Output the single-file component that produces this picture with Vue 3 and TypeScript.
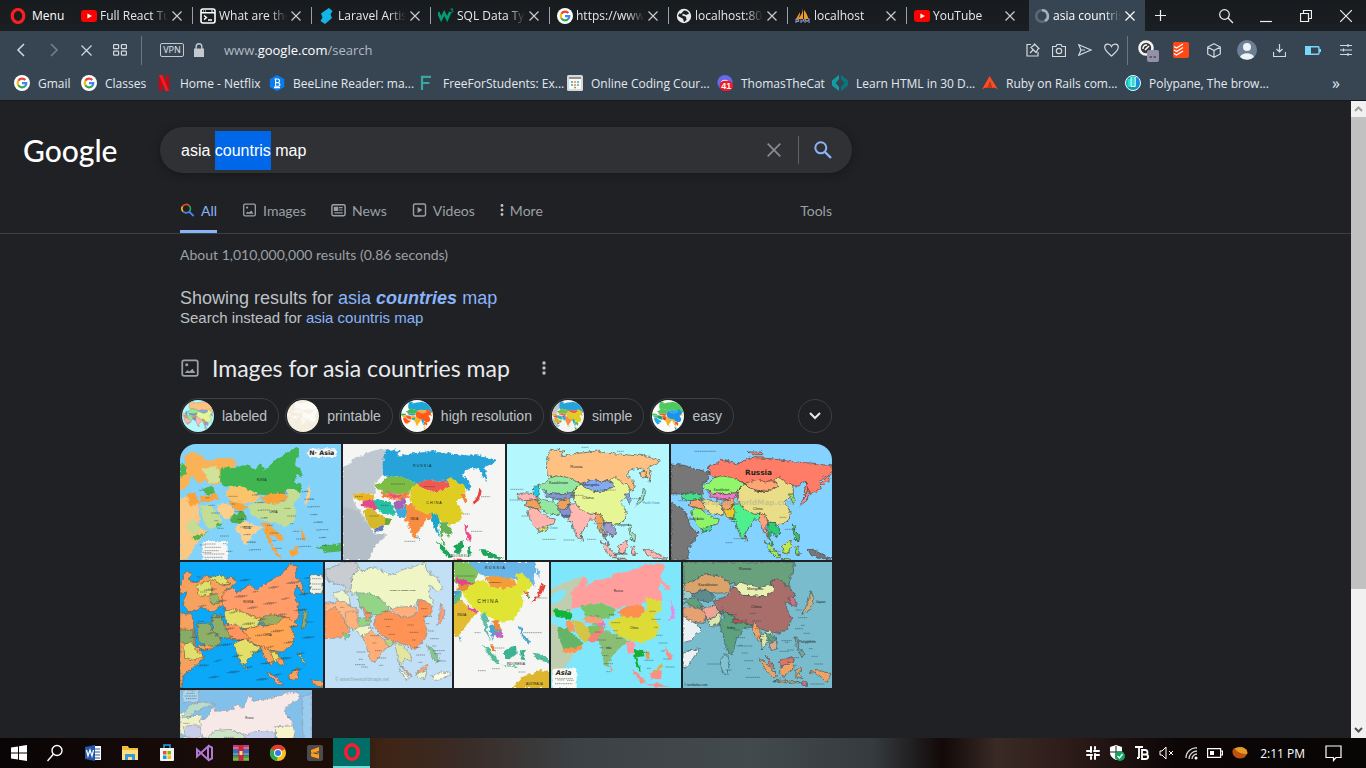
<script setup lang="ts">
import { onMounted, ref } from 'vue'

type Area = [fill: string, points: string]
type Label = [text: string, x: number, y: number, size: number, fill?: string]
interface MapTile {
  name: string
  w: number
  h: number
  sea: string
  outline: string
  areas: Area[]
  labels: Label[]
  notes: [x: number, y: number, length: number][]
}

const query = ref('asia countris map')
const box = ref<HTMLInputElement | null>(null)

onMounted(() => {
  box.value?.focus()
  box.value?.setSelectionRange(5, 13)
})

const tabs = [
  { icon: 'youtube', title: 'Full React Tu' },
  { icon: 'terminal', title: 'What are the' },
  { icon: 'bolt', title: 'Laravel Artis' },
  { icon: 'w3', title: 'SQL Data Ty' },
  { icon: 'google', title: 'https://www' },
  { icon: 'globe', title: 'localhost:80' },
  { icon: 'sail', title: 'localhost' },
  { icon: 'youtube', title: 'YouTube' },
  { icon: 'spinner', title: 'asia countris' },
]

const bookmarks = [
  { icon: 'google', title: 'Gmail' },
  { icon: 'google', title: 'Classes' },
  { icon: 'netflix', title: 'Home - Netflix' },
  { icon: 'beeline', title: 'BeeLine Reader: ma...' },
  { icon: 'f', title: 'FreeForStudents: Ex...' },
  { icon: 'calendar', title: 'Online Coding Cour...' },
  { icon: 'discord', title: 'ThomasTheCat' },
  { icon: 'learn', title: 'Learn HTML in 30 D...' },
  { icon: 'ruby', title: 'Ruby on Rails com...' },
  { icon: 'polypane', title: 'Polypane, The brow...' },
]

const shape = {
  russia: '120,90 118,60 130,20 150,15 170,22 160,34 180,34 210,28 240,25 270,18 290,28 340,30 380,35 400,30 430,40 460,52 440,62 425,70 432,90 428,112 418,95 410,78 395,72 370,78 360,92 378,110 382,130 375,142 362,125 335,108 318,114 300,110 280,114 262,106 240,112 222,119 200,108 180,100 150,95 135,102',
  kazakhstan: '92,122 115,116 130,102 150,95 180,100 205,110 222,120 206,132 200,146 180,148 160,152 140,146 126,152 108,136',
  mongolia: '220,119 240,112 262,106 280,114 300,110 320,115 318,130 300,138 275,146 250,137 232,130',
  china: '202,146 206,132 222,120 232,130 250,137 275,146 300,138 320,128 312,108 325,100 365,125 368,145 352,165 338,172 350,190 358,205 355,225 340,238 320,242 300,235 285,225 265,215 248,210 225,200 205,182 198,162',
  india: '186,180 205,180 225,200 250,210 268,212 262,226 250,225 240,245 225,262 218,284 210,280 198,250 195,236 182,230 190,215 184,200',
  stans: '110,142 126,152 140,146 160,152 180,148 200,146 196,160 176,166 150,168 130,160 118,158',
  iran: '92,165 115,168 140,172 152,188 157,212 135,212 115,205 98,190',
  afghan: '150,176 175,164 190,168 182,192 160,196 152,188',
  pakistan: '157,196 182,192 190,178 192,206 182,222 164,216',
  turkey: '30,152 50,146 92,150 94,164 60,170 34,166',
  iraq: '60,170 92,165 102,190 95,197 74,190 56,186',
  arabia: '62,200 72,190 95,197 115,215 128,222 145,225 140,240 115,247 92,255 80,245 68,222',
  yemen: '90,255 115,247 126,244 120,256 95,266',
  burma: '266,205 285,216 292,238 284,246 290,280 280,268 272,244 264,230',
  thai: '290,238 312,238 326,252 325,270 315,280 305,265 296,268 300,288 308,304 300,300 292,275',
  sumatra: '280,290 300,305 328,338 318,342 295,318',
  borneo: '334,310 358,288 362,308 350,330 336,326',
  java: '328,344 350,344 372,350 350,352',
  sulawesi: '372,310 386,306 380,316 388,332 374,330',
  philippines: '364,240 374,245 373,262 386,276 384,290 374,288 366,262',
  papua: '412,318 432,320 460,334 482,346 440,342 420,334',
  japan: '410,132 416,142 411,156 409,168 394,180 384,186 396,170 404,154',
  korea: '352,150 366,150 370,164 374,174 366,178 360,164',
  lanka: '222,276 230,284 226,292',
}

const keys = Object.keys(shape) as (keyof typeof shape)[]
const paint = (fills: string[]): Area[] => keys.map((key, i): Area => [fills[i % fills.length], shape[key]])

const ticks = (w: number, h: number, count: number, top = 0.4): [number, number, number][] =>
  Array.from({ length: count }, (_, i): [number, number, number] => [
    Math.round(w * (0.12 + ((i * 0.381) % 0.78))),
    Math.round(h * (top + ((i * 0.237) % (0.94 - top)))),
    12 + (i % 3) * 7,
  ])

const rows: { size: string; tiles: MapTile[] }[] = [
  {
    size: 'first',
    tiles: [
      {
        name: 'Asia political map with legend', w: 483, h: 348, sea: '#82d2fa', outline: 'none',
        areas: [
          ['#f9b254', '0,90 15,55 16,30 35,22 60,32 80,50 120,42 165,44 168,62 145,82 122,95 125,118 100,122 74,108 60,120 36,96 20,130 0,140'],
          ['#4db551', '0,60 14,56 20,92 0,98'], ['#d1e39b', '64,72 110,66 122,112 90,118'], ['#4db551', '66,132 100,126 106,148 78,152'],
          ['#fbc883', '0,165 20,155 60,175 55,190 62,228 50,238 62,252 84,262 50,300 20,348 0,348'],
          ['#c4dc93', '20,240 40,226 64,255 46,270 24,268'], ['#4db551', '34,280 84,262 50,292'],
          ['#fba23a', '20,150 46,146 60,178 30,188'], ['#fba23a', '58,158 110,150 118,166 66,174'],
          ['#3fb653', '122,75 140,68 165,72 200,60 225,75 240,58 255,78 290,45 320,28 350,8 360,20 345,60 360,75 370,98 350,90 345,110 365,122 360,152 345,140 325,133 310,148 280,155 240,152 210,140 180,125 140,130 120,115'],
          ['#fbc46a', '135,142 150,130 180,125 215,140 238,156 225,172 190,180 160,174 145,165'],
          ['#fba33a', '240,160 270,150 310,148 325,160 300,178 265,180'],
          ['#c3dd92', '205,185 235,170 265,180 300,178 325,160 320,135 345,135 362,150 355,165 338,180 350,205 340,235 315,248 290,240 270,235 240,225 215,215'],
          ['#fcd08b', '175,240 200,230 220,243 248,250 235,260 215,275 200,305 190,300 180,270 165,255'],
          ['#fcd08b', '110,185 140,178 160,190 165,222 135,226 115,205'], ['#4fae4a', '155,215 190,202 200,222 180,240 150,234'],
          ['#fba33a', '145,170 190,180 205,190 180,204 160,192'], ['#c3dd92', '60,185 88,180 108,205 125,228 118,245 85,255 70,230'],
          ['#fba33a', '245,236 268,238 285,258 312,280 300,298 288,278 270,272 278,312 262,284'],
          ['#fba33a', '266,296 284,310 306,344 292,340'], ['#fba33a', '326,322 352,306 354,330 334,338'],
          ['#fba33a', '358,250 368,262 378,290 366,282'], ['#4db551', '404,310 450,304 483,296 483,322 440,326'],
          ['#fcd08b', '385,120 392,142 388,166 376,184 378,160'], ['#4db551', '112,236 130,236 122,250 108,250'],
          ['#f6f6f4', '67,291 143,291 143,347 67,347'], ['#f6f6f4', '380,26 386,14 464,13 474,26 464,39 386,39'],
        ],
        labels: [['N· Asia', 388, 34, 19], ['RUSSIA', 230, 112, 8], ['CHINA', 268, 208, 8], ['INDIA', 190, 256, 8]],
        notes: [...ticks(483, 348, 60), [74, 300, 34], [74, 310, 50], [74, 320, 42], [74, 330, 60], [74, 340, 55]],
      },
      {
        name: 'Map of Asia and its regions', w: 486, h: 348, sea: '#f5f6f3', outline: 'none',
        areas: [
          ['#bfc8d1', '0,52 40,42 70,28 112,14 140,20 118,60 120,92 92,122 100,148 40,148 30,166 40,190 60,210 92,268 132,272 100,300 78,348 0,348'],
          ['#f5f6f3', '0,48 30,44 26,60 0,66'], ['#b3bec8', '0,190 44,200 90,268 124,272 100,298 78,348 0,348'],
          ...paint(['#26a4da', '#7dbd44', '#ee5a50', '#dfcd20', '#f68d3f', '#f27f42', '#25c1a5', '#a564b4', '#3ba9dc', '#eab51c', '#e24b86', '#d5b92b', '#5d7bbd', '#1fa6c9', '#66b154', '#1da45b', '#1da45b', '#e1433b', '#1da45b', '#ea4a8a', '#1da45b', '#e5403e', '#f08a35', '#38a5d5']),
          ['#66a83e', '128,222 145,225 138,242 124,244'], ['#ef4c83', '130,140 152,152 176,156 152,166'],
        ],
        labels: [['R U S S I A', 210, 70, 11], ['C H I N A', 250, 180, 11], ['INDIA', 202, 228, 9], ['I N D O N E S I A', 318, 340, 8]],
        notes: [[144, 120, 42], [114, 184, 24], [414, 158, 28], [384, 262, 34], [184, 292, 34], [360, 210, 20], [242, 128, 34], [80, 216, 26], [36, 158, 24]],
      },
      {
        name: 'Outlined map of Asian countries', w: 486, h: 348, sea: '#b4f8fd', outline: '#4a5046',
        areas: [
          ...paint(['#ffc182', '#94e7a0', '#84abf0', '#e7f694', '#ffb9b2', '#8296d2', '#94e7a0', '#efa05d', '#8293d5', '#ffb4b4', '#efa05d', '#ffb4ae', '#f1df68', '#efa05d', '#9f9ad1', '#ffb4ae', '#ffb4ae', '#ffb4ae', '#ffb4ae', '#9fe2bd', '#ffb4ae', '#9fe2d0', '#8aa4ef', '#ffb4ae']),
          ['#19cbe1', '80,128 94,124 96,150 88,162 78,150'], ['#ffc182', '400,86 412,78 418,98 404,102'],
        ],
        labels: [['Russia', 190, 72, 12], ['Kazakhstan', 126, 120, 11], ['Mongolia', 228, 126, 12], ['China', 226, 164, 13], ['India', 164, 218, 11], ['Indian Ocean', 104, 256, 8, '#36789e'], ['Pacific Ocean', 408, 180, 8, '#36789e'], ['Philippines', 324, 246, 10], ['Indonesia', 322, 334, 9]],
        notes: [[224, 10, 20], [330, 22, 22], [10, 136, 40], [8, 168, 36], [106, 286, 40], [170, 288, 34], [370, 164, 32], [280, 138, 46], [44, 216, 26], [190, 154, 40], [260, 238, 48], [322, 342, 34], [288, 272, 40], [240, 286, 28]],
      },
      {
        name: 'Political world map section with Russia', w: 483, h: 348, sea: '#84d2ff', outline: '#4a4036',
        areas: [
          ['#777777', '0,60 40,64 76,76 112,84 114,104 92,120 96,148 40,150 0,150'], ['#777777', '0,176 40,198 60,250 84,268 54,310 50,348 0,348'],
          ['#ff7b66', '114,90 112,64 140,60 146,46 200,60 240,40 300,44 370,54 430,58 483,66 483,92 466,96 446,110 450,130 442,140 420,150 408,130 400,112 380,126 335,118 300,128 262,122 222,119 200,108 150,112'],
          ...paint(['#ff7b66', '#91f66c', '#ffa573', '#eadd88', '#4df08d', '#ef78c6', '#eee08b', '#f2a66d', '#eac52d', '#45df8b', '#f2a06d', '#8ff46a', '#43df8b', '#ffa377', '#26cf70', '#9cec60', '#bfe94e', '#8eea66', '#7ce05c', '#33c465', '#777777', '#f28a92', '#9cdc60', '#f28a92']).slice(1),
          ['#ff7b66', '400,142 406,116 410,138 402,160'], ['#ff7b66', '448,120 470,96 476,104 458,124'], ['#ff7b66', '228,24 270,24 276,32 244,32'],
        ],
        labels: [['GraphicWorldMap.com', 90, 182, 22, '#8d9a8866'], ['Russia', 222, 94, 22], ['Kazakhstan', 128, 140, 9], ['Mongolia', 250, 144, 9], ['China', 246, 198, 11], ['India', 174, 228, 10], ['Saudi Arabia', 54, 228, 8]],
        notes: [[70, 22, 66], [22, 170, 26], [188, 284, 34], [164, 296, 20], [342, 256, 34], [292, 322, 36], [326, 220, 20]],
      },
    ],
  },
  {
    size: 'second',
    tiles: [
      {
        name: 'Detailed map of Europe and Asia', w: 429, h: 378, sea: '#0ba7f8', outline: '#775f3c',
        areas: [
          ['#f7a15f', '0,70 18,24 34,34 28,56 50,60 80,40 120,54 160,44 168,60 150,76 132,88 130,128 100,150 64,136 28,152 10,128 20,92 0,96'], ['#dfe16c', '48,72 90,56 100,96 60,104'], ['#96b56c', '90,100 114,94 118,124 92,126'], ['#dfe16c', '84,44 130,40 150,68 120,68'],
          ['#f7a15f', '0,150 36,160 44,206 46,250 74,284 56,304 10,340 6,378 0,378'], ['#86ac6a', '0,200 42,204 42,250 0,240'], ['#dfe16c', '12,250 34,238 52,270 74,284 40,294 14,286'],
          ['#ff9c6b', '126,120 130,88 156,78 170,92 210,68 230,84 264,60 300,40 330,8 352,12 344,40 366,66 374,100 352,72 340,92 354,120 356,168 340,180 316,164 280,160 230,172 200,156 160,160 138,150'],
          ['#e4df68', '132,152 156,140 190,150 214,162 250,172 232,190 200,200 168,196 140,184'],
          ['#97ad62', '236,176 260,158 300,160 310,172 286,190 256,190'],
          ['#ffa553', '186,204 230,190 260,192 300,180 314,162 340,176 354,192 332,196 344,220 336,250 306,270 276,266 240,254 210,240'],
          ['#e4df68', '160,246 196,228 220,248 246,258 214,280 194,310 182,308 172,270'], ['#ff9460', '130,190 170,186 186,206 210,230 180,234 150,232 130,212'],
          ['#8fae67', '96,160 124,156 132,190 156,228 122,230 100,206'], ['#8fae67', '52,186 86,182 102,210 124,236 112,252 78,256 54,232'], ['#f7a15f', '52,250 112,252 86,266 60,262'],
          ['#f7a15f', '240,252 276,266 304,284 314,306 300,310 284,290 270,310 252,282'], ['#e4df68', '268,266 300,280 286,300'],
          ['#ff9c6b', '258,330 276,336 310,368 296,368'], ['#f7a15f', '322,340 354,320 354,350 330,352'], ['#dfe16c', '352,272 362,280 378,306 370,304'], ['#8fae67', '372,140 382,160 376,192 364,202 368,176'], ['#f7a15f', '390,352 429,360 429,378 400,366'],
          ['#f2f1e6', '390,38 429,38 429,94 390,94'], ['#dfe16c', '194,316 202,314 200,328'],
        ],
        labels: [['RUSSIA', 190, 122, 8], ['CHINA', 250, 222, 8]],
        notes: [...ticks(429, 378, 130, 0.12), [30, 60, 22], [60, 90, 22], [30, 226, 22], [396, 50, 28], [396, 66, 26], [396, 82, 28]],
      },
      {
        name: 'Pastel map of Asia', w: 381, h: 378, sea: '#c1e0f5', outline: '#7e9298',
        areas: [
          ['#c9cdd2', '0,24 34,10 60,0 98,0 100,24 78,50 84,86 60,92 60,70 30,66 0,50'], ['#edf3c9', '24,92 60,86 72,104 76,128 40,120'], ['#ffb786', '0,124 60,118 74,132 100,144 98,190 60,200 0,210'], ['#ff9b5f', '0,150 34,136 56,168 72,210 50,228 0,230'], ['#80ca8b', '52,212 76,218 62,232'],
          ['#eff5c5', '78,96 80,46 104,14 112,30 146,14 200,40 236,22 280,10 300,4 306,28 340,50 352,80 336,88 316,70 310,90 324,120 322,142 300,118 282,110 270,132 236,140 190,140 170,116 130,94'],
          ['#93d486', '94,92 130,94 170,112 192,138 180,160 150,158 130,170 108,138'], ['#ffae7c', '196,140 236,134 268,134 276,150 256,166 224,164'],
          ['#ff9354', '150,164 190,144 224,164 256,166 280,150 278,112 300,116 324,136 320,152 296,170 306,200 300,230 272,262 240,248 200,236 160,212 146,190'],
          ['#ffb27c', '60,150 92,146 106,190 84,204 64,188'], ['#93d486', '98,172 134,164 138,186 104,196'], ['#eff5c5', '90,196 134,190 140,216 106,222'], ['#ff9354', '108,132 140,160 126,172'],
          ['#ffae78', '110,222 140,206 176,230 216,240 190,254 170,272 150,300 136,296 128,258'],
          ['#b9d483', '178,230 206,236 200,252 182,244'], ['#e4e6a0', '210,246 232,250 256,276 262,300 240,290 226,312 216,276'],
          ['#ff9b70', '222,306 246,328 264,346 250,338'], ['#f9f5c9', '222,320 256,348 244,356'], ['#ffa376', '272,332 308,306 308,320 276,336'], ['#edf3c9', '272,336 308,322 300,350 280,350'], ['#80ca8b', '308,250 322,262 344,292 338,306 318,284'], ['#ff9c75', '346,124 360,146 352,176 334,192 344,164'], ['#fffae0', '320,340 350,330 381,334 360,346 330,356'],
        ],
        labels: [['RUSSIAN FEDERATION', 194, 88, 7], ['© www.freeworldmaps.net', 30, 358, 14, '#91a7b1']],
        notes: [...ticks(381, 340, 30), [90, 308, 30], [325, 266, 35]],
      },
      {
        name: 'Map of East Asia', w: 285, h: 378, sea: '#f5f6f3', outline: 'none',
        areas: [
          ['#67b5e7', '40,0 240,0 248,20 236,46 242,76 224,54 196,36 190,54 140,50 90,40 62,30'], ['#81c25d', '0,0 40,0 76,34 60,60 30,72 0,60'], ['#f49d38', '92,44 130,42 180,54 190,70 150,82 110,74'],
          ['#dfe532', '26,84 60,60 92,54 110,74 150,82 190,70 186,36 208,34 236,66 218,92 200,96 212,118 196,150 174,174 140,180 100,162 60,140 38,116'],
          ['#df478d', '0,48 36,54 64,66 22,76'], ['#e48f35', '12,70 46,66 36,84 10,84'], ['#43a3ce', '0,84 24,86 10,104 0,106'], ['#61b98b', '0,104 24,90 20,120 0,128'],
          ['#e3bc32', '0,128 22,114 46,140 74,154 52,170 40,188 24,206 14,224 0,222'], ['#e64e9e', '38,130 74,148 72,156 44,142'],
          ['#62bda7', '78,156 92,150 104,172 98,200 112,238 96,212'], ['#46a7d2', '104,190 130,184 140,206 122,212 116,238'], ['#f08c37', '112,178 132,174 142,204 126,202'], ['#bd68bd', '116,212 142,206 150,226 130,230'],
          ['#53bd9d', '86,248 104,258 140,306 128,306 104,280'], ['#ef7b35', '108,246 124,260 126,272 112,262'], ['#3eb394', '150,266 186,248 188,276 168,292 150,290'], ['#53bd9d', '140,308 186,318 196,316 164,310'], ['#3eb394', '198,264 218,260 208,280 218,296 200,290'],
          ['#4ba5ce', '194,190 206,200 204,216 228,234 224,248 204,224'], ['#53bd9d', '236,272 262,276 285,290 285,302 250,294'], ['#e5443e', '262,62 272,70 264,92 240,118 232,122 250,96'], ['#de634d', '208,86 222,92 224,108 216,102'], ['#39a165', '216,100 228,102 224,112'], ['#ddb62f', '172,378 206,344 260,324 285,330 285,378'], ['#67b5e7', '248,18 258,28 256,48 250,36'], ['#46a7d2', '14,222 22,224 18,240'],
        ],
        labels: [['R U S S I A', 92, 20, 12], ['C H I N A', 70, 122, 15], ['INDIA', 10, 162, 10], ['INDONESIA', 158, 308, 10], ['MONGOLIA', 106, 64, 7], ['AUSTRALIA', 216, 370, 9]],
        notes: [[8, 42, 54], [240, 108, 40], [208, 212, 56], [62, 212, 18], [118, 258, 34], [72, 326, 24], [114, 320, 24], [194, 330, 20]],
      },
      {
        name: 'Pink and yellow map of Asia', w: 390, h: 378, sea: '#7fe7fc', outline: 'none',
        areas: [
          ['#bfceb0', '0,80 40,60 96,42 80,70 64,96 66,140 40,170 0,160'], ['#bfceb0', '0,182 18,192 40,244 70,278 40,320 0,330'], ['#7fe7fc', '0,100 28,82 50,88 30,116 0,128'],
          ['#ff9e9d', '62,140 62,92 80,70 96,42 110,60 102,76 130,54 182,50 188,34 226,30 280,10 330,4 342,18 326,44 342,62 360,78 348,84 330,64 322,80 336,110 322,130 290,108 266,134 230,130 196,142 160,126 130,124 90,136'],
          ['#7cc36a', '86,132 124,124 160,126 196,144 184,164 150,172 128,158 106,164'], ['#ff904b', '196,150 230,132 270,130 286,142 262,168 216,164'],
          ['#dddb36', '174,178 216,164 262,168 288,142 284,106 332,118 330,146 308,158 326,194 312,226 276,244 240,236 200,220 178,196'],
          ['#d6c446', '64,174 92,180 110,196 140,202 132,232 100,240 72,208'], ['#80bf61', '112,192 150,188 164,196 142,216 116,220'], ['#f1857b', '116,218 160,194 156,220 130,240 110,236'], ['#fa9f75', '94,168 130,160 160,178 140,188 104,182'], ['#e875cd', '138,184 160,176 164,190 144,196'],
          ['#8bbd75', '140,226 164,204 200,220 238,238 204,258 178,290 172,316 160,308 150,264'], ['#11b53b', '8,142 50,148 64,158 62,174 14,164'], ['#f89862', '44,178 64,174 70,210 48,206'],
          ['#65b467', '20,194 48,200 72,220 98,246 78,264 40,266 22,226'], ['#ff954d', '34,262 80,256 96,248 88,266 40,274'],
          ['#ff98a1', '224,236 250,240 250,274 232,274'], ['#17ae35', '250,262 276,264 280,282 258,286 270,330 256,314 250,284'], ['#e1a048', '280,268 298,278 290,296'],
          ['#ff8d86', '240,320 260,332 284,360 270,364'], ['#ff8d86', '298,332 332,324 330,352 300,350'], ['#dfad43', '308,328 334,302 336,310 314,334'], ['#ff8d86', '284,368 320,364 354,374 310,374'], ['#ff8d86', '342,250 350,268 366,284 358,296 344,276'], ['#e88ce8', '356,112 372,144 370,168 352,178 362,156'], ['#f29861', '176,312 186,320 180,326'],
          ['#f8f9f2', '4,320 77,318 77,378 4,378'],
        ],
        labels: [['Asia', 14, 339, 20], ['Russia', 188, 91, 9], ['China', 238, 200, 9], ['India', 164, 260, 8]],
        notes: [...ticks(390, 360, 24), [12, 350, 54], [20, 354, 20], [48, 355, 20], [12, 365, 52]],
      },
      {
        name: 'Teal map of Asia', w: 447, h: 378, sea: '#78bccd', outline: '#40505a',
        areas: [
          ['#69a17d', '0,0 335,0 330,36 322,40 318,70 334,102 320,92 302,60 280,52 262,60 270,90 230,84 172,70 140,62 110,42 62,36 28,60 0,66'], ['#9dcad1', '0,84 12,78 30,104 0,128'], ['#d9a36b', '0,64 28,60 62,36 110,42 144,64 140,92 92,94 54,84 30,98 10,88'], ['#eaf0b0', '150,72 172,62 230,76 268,68 276,90 244,104 180,100'],
          ['#a96e6a', '90,116 130,104 150,72 180,100 244,104 274,86 262,58 284,48 322,82 334,100 320,128 306,118 314,150 326,170 314,202 284,214 226,200 180,180 140,158 112,152 100,134'],
          ['#5d8a8d', '26,96 70,84 96,104 78,122 44,112'], ['#f0a594', '56,138 96,132 110,152 82,176 58,166'], ['#e6a172', '0,138 44,132 68,156 66,184 20,180 0,170'], ['#dae6aa', '74,174 116,152 110,186 82,194'], ['#62a07c', '0,110 38,108 62,134 30,136'],
          ['#5da07d', '118,140 140,160 186,182 216,192 184,200 160,232 148,278 138,274 118,216 108,182 124,168'], ['#bf514d', '148,170 190,176 194,184 152,182'], ['#ebf0f2', '0,162 40,186 54,206 22,236 0,242'], ['#ebf0f2', '0,270 50,260 14,312 0,318'],
          ['#eda365', '212,182 230,200 234,240 218,226 208,200'], ['#dae6aa', '232,218 262,206 276,238 250,242 238,264'], ['#5da07d', '248,212 278,226 276,242 256,236'], ['#d7ac8d', '258,246 280,238 284,260 266,266'],
          ['#eda365', '226,290 246,300 284,342 266,344 244,318'], ['#df7365', '250,280 264,302 276,322 262,314'], ['#eda365', '288,330 300,310 334,290 328,324 300,346'], ['#df7365', '282,300 326,284 330,298 296,312'], ['#d3ac77', '338,324 358,318 348,334 360,350 340,344'], ['#7aa396', '336,224 348,234 346,258 366,276 358,288 340,256'],
          ['#d3ac77', '384,86 394,112 380,144 356,156 374,124'], ['#cc7180', '316,110 334,104 340,134 326,130'], ['#eda365', '380,330 400,322 447,336 430,362 410,340'], ['#d3ac77', '272,356 320,364 350,362 300,354'], ['#cc7180', '354,362 370,358 374,370 358,370'], ['#7fc3d3', '118,280 134,278 140,306 132,336 118,332 112,300'],
        ],
        labels: [['Russia', 168, 24, 12], ['Kazakhstan', 46, 72, 11], ['Mongolia', 192, 83, 12], ['China', 204, 138, 12], ['India', 132, 202, 11], ['Japan', 398, 124, 11], ['Philippines', 346, 242, 11], ['© worldatlas.com', 4, 372, 9]],
        notes: [...ticks(447, 350, 26), [160, 252, 48], [74, 306, 36], [188, 346, 44], [296, 236, 30], [290, 268, 28], [336, 200, 24], [382, 366, 42]],
      },
    ],
  },
  {
    size: 'third',
    tiles: [
      {
        name: 'Light map of northern Asia', w: 396, h: 378, sea: '#82c0ec', outline: '#9a9aa8',
        areas: [
          ['#eff2c6', '0,70 26,60 36,80 62,74 70,100 66,130 30,140 0,132'], ['#c9cee9', '10,110 50,104 70,130 60,160 20,150'], ['#b8dcc8', '6,80 30,46 60,36 106,40 70,54 44,64 28,84'],
          ['#f7e9e8', '62,120 62,90 82,84 100,48 104,64 150,60 180,42 184,58 210,18 220,34 264,26 316,10 352,6 360,24 320,50 312,64 330,88 346,120 340,144 300,110 286,122 270,140 200,136 150,118 100,140 70,144'],
          ['#cce5c6', '84,144 104,122 150,118 196,136 200,160 120,164'], ['#c4cdeb', '196,136 226,124 284,126 290,160 200,160'], ['#f8f5c9', '286,110 340,108 344,160 290,160'], ['#f8e0cd', '0,144 60,140 84,160 80,200 0,200'],
          ['#abd8f0', '8,2 56,2 56,36 8,36'], ['#9bcbed', '366,20 396,10 396,160 370,160'],
        ],
        labels: [['Russia', 196, 86, 8]],
        notes: [[20, 10, 24], [14, 18, 36], [18, 26, 32], [132, 142, 30], [322, 82, 8], [20, 80, 14], [10, 100, 18]],
      },
    ],
  },
]

const chips = [
  { label: 'labeled', row: 0, tile: 2 },
  { label: 'printable', row: -1, tile: 0 },
  { label: 'high resolution', row: 0, tile: 3, tint: ['#1fa6da', '#43b752', '#f8a92e', '#ff5a1c', '#f8b61e', '#1fa6da', '#ff5a1c', '#f8b61e'] },
  { label: 'simple', row: 0, tile: 1 },
  { label: 'easy', row: 0, tile: 1, tint: ['#50c95d', '#50c95d', '#26a9ed', '#1a93ea', '#f0b429', '#e8611c', '#18a565', '#e8611c', '#e5302f'] },
].map((chip) => {
  const blank: Area[] = paint(['#fdfbf6', '#fbf7ee', '#f8f2e6'])
  const base = chip.row < 0 ? null : rows[chip.row].tiles[chip.tile]
  return {
    label: chip.label,
    sea: chip.tint ? '#fbfbf9' : base ? base.sea : '#f5efe0',
    outline: chip.label === 'labeled' ? '#5d776a' : base ? 'none' : '#e8e0cf',
    areas: chip.tint ? paint(chip.tint) : base ? base.areas : blank,
  }
})

const modes = [
  { icon: 'all', label: 'All' },
  { icon: 'images', label: 'Images' },
  { icon: 'news', label: 'News' },
  { icon: 'videos', label: 'Videos' },
]

const apps = ['start', 'search', 'word', 'folder', 'store', 'vs', 'rar', 'chrome', 'sublime', 'opera']
</script>

<template>
  <div class="screen">
    <svg class="defs" width="0" height="0" aria-hidden="true">
      <defs>
        <filter id="coast" x="-5%" y="-5%" width="110%" height="110%">
          <feTurbulence type="fractalNoise" baseFrequency="0.09" numOctaves="2" seed="4" />
          <feDisplacementMap in="SourceGraphic" scale="14" xChannelSelector="R" yChannelSelector="G" />
        </filter>
        <symbol id="i-google" viewBox="0 0 16 16">
          <circle cx="8" cy="8" r="8" fill="#fff" />
          <g fill="none" stroke-width="2.2">
            <path d="M4.3 5.7A4.4 4.4 0 0 1 11.3 5" stroke="#ea4335" />
            <path d="M4.3 10.3A4.5 4.5 0 0 1 4.3 5.7" stroke="#fbbc05" />
            <path d="M11.2 11.1A4.4 4.4 0 0 1 4.3 10.3" stroke="#34a853" />
            <path d="M8 8.1h4.3A4.4 4.4 0 0 1 11.1 11.2" stroke="#4285f4" />
          </g>
        </symbol>
        <symbol id="i-youtube" viewBox="0 0 16 16"><rect y="2" width="16" height="12" rx="3" fill="#f00" /><path d="M6.4 5.4 11 8l-4.6 2.6z" fill="#fff" /></symbol>
        <symbol id="i-terminal" viewBox="0 0 16 16"><rect x="1" y="1" width="14" height="14" rx="2" fill="none" stroke="#fff" stroke-width="1.6" /><path d="M1 4.8h14M4 7.5l2.5 2L4 11.6M8 12h4" fill="none" stroke="#fff" stroke-width="1.4" /><path d="M3 3h1M5 3h1M11 3h2" stroke="#fff" /></symbol>
        <symbol id="i-bolt" viewBox="0 0 16 16"><path d="M9.800 0 2 5.500l1.500 4L1.500 13l4.500 3 7-6-1.500-3.500L13.500 3z" fill="#12b5e5" /></symbol>
        <symbol id="i-w3" viewBox="0 0 16 16"><path d="m0 4 3.2 7 3-6 3 6 3-7" fill="none" stroke="#049a76" stroke-width="2.700" /><path d="M12.500 1H15l-1.400 1.600c2 0 1.600 2.400-1 1.800" fill="none" stroke="#049a76" /></symbol>
        <symbol id="i-globe" viewBox="0 0 16 16"><circle cx="8" cy="8" r="7.2" fill="#e7ebee" /><path d="M8 2.5c3 .2 4.500 1.700 5 3.200L10 7 7 5.800l-1 1.500 4 1.500.6 3L8 14.200 7 10.800 2 8l1.300-2.600L5 5.800z" fill="#1a2024" /></symbol>
        <symbol id="i-sail" viewBox="0 0 16 16"><path d="M8 0C7.8 4 6 8 3 11h5zM9 2v9h5C12.500 9 12 5 9 2zM5 4 1 11h2c1.500-2 2-4 2-7z" fill="#f59a23" /><path d="M1 15v-3.600h2.600v2H1M6 11.400V15m0-2h2.400v-2M10 15v-3.600l2 2 2-2V15" fill="none" stroke="#858dc4" stroke-width="1.200" /></symbol>
        <symbol id="i-spinner" viewBox="0 0 16 16"><circle cx="8" cy="8" r="5.800" fill="none" stroke="#5d6a76" stroke-width="2.500" /><path d="M8 2.200a5.800 5.800 0 0 1 3 10.800" fill="none" stroke="#a8b1ba" stroke-width="2.500" /></symbol>
        <symbol id="i-netflix" viewBox="0 0 16 16"><path d="M3 0h3.400v16L3 16zM9.600 0H13v16H9.600z" fill="#c9090f" /><path d="M3 0h3.400L13 16H9.600z" fill="#ff1520" /></symbol>
        <symbol id="i-beeline" viewBox="0 0 16 16"><path d="m8 0 7.200 4v8L8 16 .8 12V4z" fill="#087cf3" /><path d="M5.500 4h3.300c2.300 0 2.200 3.300 0 3.600 2.800.2 2.800 3.700 0 3.700H5.500M6.600 4v7.300M6.600 7.600h2.500M5 12.600h6" fill="none" stroke="#fff" stroke-width="1.100" /></symbol>
        <symbol id="i-f" viewBox="0 0 16 16"><path d="M3 15V1.800h9M3 8h7.500" fill="none" stroke="#35a99f" stroke-width="2.200" /></symbol>
        <symbol id="i-calendar" viewBox="0 0 16 16"><rect width="16" height="16" rx="1.500" fill="#d7d7d4" /><rect x="2" y="2.500" width="12" height="11.500" fill="#f9f9f9" /><path d="M2 3h12" stroke="#777" stroke-width="1.600" /><path d="M4 7h2M10 7h2M4 10h2" stroke="#3da1c9" stroke-width="1.600" /><path d="M7 7h2M7 10h2" stroke="#e3864b" stroke-width="1.600" /><path d="M10 10h2M7 12.500h2" stroke="#6bb46b" stroke-width="1.400" /></symbol>
        <symbol id="i-discord" viewBox="0 0 16 16"><circle cx="8" cy="7.600" r="7.600" fill="#6669ec" /><path d="M4 7c1-3 7-3 8 0" fill="#fff" /><rect x="2.600" y="5.800" width="13.400" height="10.200" rx="5" fill="#ef1b25" /><text x="4.200" y="14.200" font-size="9" font-weight="700" fill="#fff" font-family="Liberation Sans, sans-serif">41</text></symbol>
        <symbol id="i-learn" viewBox="0 0 16 16"><path d="M7 0v4L3.600 8 7 12v4L0 10.500v-5z" fill="#119da4" /><path d="M9 0v4l3.400 4L9 12v4l7-5.500v-5z" fill="#0b747c" /></symbol>
        <symbol id="i-ruby" viewBox="0 0 16 16"><path d="M7.600 1 16 14.500c-2-1.800-4-2-5.700-1.500L8 6.500 5.600 13C4 12.300 2 13 0 14.500z" fill="#ff4b1f" /><path d="M8 7.500 5.800 13h4.400z" fill="#d43410" /></symbol>
        <symbol id="i-polypane" viewBox="0 0 16 16"><circle cx="8" cy="8" r="7.500" fill="#079cb0" stroke="#f3ffff" /><path d="M2.500 4h3v8h-3zM6 1.500h4v10H6z" fill="#26ded2" /><path d="M10.500 3h3v9h-3z" fill="#2485ed" /><path d="M6 2v9.500h4.200V2" fill="none" stroke="#fff" /></symbol>
        <symbol id="i-images" viewBox="0 0 16 16"><rect x="1.800" y="1.800" width="12.400" height="12.400" rx="1.500" fill="none" stroke="currentColor" stroke-width="1.400" /><circle cx="5.400" cy="5.400" r="1.200" fill="currentColor" /><path d="M3.800 12l2.200-2.500 1.400 1.200L10 8.500l2.200 3.500z" fill="currentColor" /></symbol>
        <symbol id="i-news" viewBox="0 0 16 16"><rect x="1" y="2.300" width="14" height="11.800" rx="1.500" fill="none" stroke="currentColor" stroke-width="1.600" /><path d="M3.600 5h3.600v3.400H3.600zM8.600 5.500h3.800M8.600 8h3.800M3.600 11h8.800" fill="currentColor" stroke="currentColor" stroke-width="1.200" /></symbol>
        <symbol id="i-videos" viewBox="0 0 16 16"><rect x="1.600" y="1.600" width="12.800" height="12.800" rx="1.500" fill="none" stroke="currentColor" stroke-width="1.500" /><path d="M6 4.800 11 8l-5 3.200z" fill="currentColor" /></symbol>
        <symbol id="i-all" viewBox="0 0 16 16"><g fill="none" stroke-width="1.800"><path d="M2.700 4.200A4.600 4.600 0 0 1 9.600 3.200" stroke="#ea4335" /><path d="M3.400 9.800A4.600 4.600 0 0 1 2.700 4.200" stroke="#fbbc05" /><path d="M10 9.600A4.600 4.600 0 0 1 3.400 9.800" stroke="#4285f4" /><path d="M9.600 3.200a4.600 4.600 0 0 1 .4 6.400" stroke="#34a853" /><path d="M9.600 9.600l5 5" stroke="#4285f4" stroke-width="2" /></g></symbol>
      </defs>
    </svg>

    <header class="browser">
      <div class="tabstrip">
        <button class="menu" type="button">
          <svg width="16" height="16" viewBox="0 0 16 16"><ellipse cx="8" cy="8" rx="5.800" ry="6.500" fill="none" stroke="#fa1e1e" stroke-width="3.200" /></svg>
          Menu
        </button>
        <div v-for="(tab, i) in tabs" :key="i" class="tab" :class="{ active: i === 8, apart: i < 7 }">
          <svg class="favicon" width="16" height="16"><use :href="'#i-' + tab.icon" /></svg>
          <span class="title">{{ tab.title }}</span>
          <button class="close" type="button" aria-label="Close tab"><svg width="10" height="10" viewBox="0 0 10 10"><path d="M.5.5l9 9M9.500.5l-9 9" /></svg></button>
        </div>
        <button class="plain add" type="button" aria-label="New tab"><svg width="11" height="11" viewBox="0 0 11 11"><path d="M5.500 0v11M0 5.500h11" /></svg></button>
        <div class="window-controls">
          <button class="plain" type="button" aria-label="Search tabs"><svg width="16" height="16" viewBox="0 0 16 16"><circle cx="6.500" cy="6.500" r="4.800" /><path d="M10 10l5 5" /></svg></button>
          <button class="plain" type="button" aria-label="Minimize"><svg width="12" height="14" viewBox="0 0 12 14"><path d="M0 12.500h12" /></svg></button>
          <button class="plain" type="button" aria-label="Restore"><svg width="12" height="12" viewBox="0 0 12 12"><path d="M.5 3.500h8v8h-8zM3.500 3V.5h8v8H9" /></svg></button>
          <button class="plain" type="button" aria-label="Close"><svg width="12" height="12" viewBox="0 0 12 12"><path d="M0 0l12 12M12 0L0 12" /></svg></button>
        </div>
      </div>

      <div class="toolbar">
        <div class="nav">
          <button class="plain" type="button" aria-label="Back"><svg width="10" height="14" viewBox="0 0 10 14"><path d="M8 1L2 7l6 6" stroke-width="1.500" /></svg></button>
          <button class="plain dim" type="button" aria-label="Forward"><svg width="10" height="14" viewBox="0 0 10 14"><path d="M2 1l6 6-6 6" stroke-width="1.500" /></svg></button>
          <button class="plain" type="button" aria-label="Stop"><svg width="11" height="11" viewBox="0 0 11 11"><path d="M.5.5l10 10M10.500.5l-10 10" /></svg></button>
          <button class="plain" type="button" aria-label="Speed dial"><svg width="14" height="12" viewBox="0 0 14 12"><rect x=".6" y=".6" width="5" height="4" rx=".6" /><rect x="8.400" y=".6" width="5" height="4" rx=".6" /><rect x=".6" y="7.200" width="5" height="4" rx=".6" /><rect x="8.400" y="7.200" width="5" height="4" rx=".6" /></svg></button>
        </div>
        <span class="bar"></span>
        <button class="vpn" type="button">VPN</button>
        <svg class="lock" width="10" height="14" viewBox="0 0 10 14"><path d="M0 5.500h10V14H0z" fill="#c3c9ce" /><path d="M2.200 6V3.600a2.800 2.800 0 0 1 5.600 0V6" fill="none" stroke="#c3c9ce" stroke-width="1.400" /></svg>
        <a class="address" href="#">www.<b>google.com</b>/search</a>
        <div class="page-tools">
          <button class="plain" type="button" aria-label="Share"><svg width="14" height="14" viewBox="0 0 14 14"><path d="M5 1.500H1v11.500h11V9M4 10l3-3M8.500 1l4.500 4.500-1 .5-2 3.500-5-5L8 2z" /></svg></button>
          <button class="plain" type="button" aria-label="Snapshot"><svg width="14" height="13" viewBox="0 0 14 13"><path d="M.5 2.500H4l1-2h4l1 2h3.500v10H.5z" /><circle cx="7" cy="7" r="2.700" /></svg></button>
          <button class="plain" type="button" aria-label="My Flow"><svg width="14" height="12" viewBox="0 0 14 12"><path d="M.8.8 13 6 .8 11.200 3 6zM3 6h4" /></svg></button>
          <button class="plain" type="button" aria-label="Bookmark"><svg width="15" height="14" viewBox="0 0 15 14"><path d="M7.500 13C4 10 .7 7.500.7 4.300.7.300 6 .2 7.500 3.500 9 .2 14.300.3 14.300 4.300 14.300 7.500 11 10 7.500 13z" /></svg></button>
        </div>
        <span class="bar"></span>
        <div class="extensions">
          <button class="plain" type="button" aria-label="Speed"><svg width="22" height="24" viewBox="0 0 22 24"><circle cx="9" cy="10" r="6.500" fill="#323940" stroke="#f5f3ea" stroke-width="2.600" /><path d="M8 12l4-4M6 11a3.500 3.500 0 0 1 4-4" stroke="#fff" stroke-width="1.500" /><rect x="10" y="12" width="12" height="12" rx="2" fill="#9391a8" stroke="none" /><path d="M12.500 19h2.500M16.500 19H19" stroke="#29292d" /></svg></button>
          <button class="plain" type="button" aria-label="Todoist"><svg width="16" height="16" viewBox="0 0 16 16"><rect width="16" height="16" rx="2" fill="#ff4817" stroke="none" /><path d="M1 4.500 3.500 6 10 2M1 8l2.500 1.500L10 5.500M1 11.500 3.500 13 10 9" stroke="#fff" stroke-width="1.300" /></svg></button>
          <button class="plain" type="button" aria-label="Extensions"><svg width="14" height="15" viewBox="0 0 14 15"><path d="M7 .7 13.300 4v7L7 14.300.7 11V4zM.7 4 7 7.500 13.300 4M7 7.500v6.800" /></svg></button>
          <button class="plain" type="button" aria-label="Profile"><svg width="20" height="20" viewBox="0 0 20 20"><circle cx="10" cy="10" r="10" fill="#6d8093" stroke="none" /><circle cx="10" cy="7" r="4" fill="#eef3f7" stroke="none" /><path d="M3 17c2-5 12-5 14 0a10 10 0 0 1-14 0z" fill="#eef3f7" stroke="none" /></svg></button>
          <button class="plain" type="button" aria-label="Downloads"><svg width="13" height="13" viewBox="0 0 13 13"><path d="M6.500 0v8M3.500 5l3 3 3-3M.5 8v4.500h12V8" /></svg></button>
          <button class="plain" type="button" aria-label="Battery saver"><svg width="16" height="9" viewBox="0 0 16 9"><rect x=".7" y=".7" width="13.300" height="7.600" rx="1" stroke="#79d7fb" stroke-width="1.400" /><path d="M0 0h6v9H0zM14 3h2v3h-2z" fill="#79d7fb" stroke="none" /></svg></button>
          <button class="plain" type="button" aria-label="Easy setup"><svg width="12" height="12" viewBox="0 0 12 12"><path d="M0 1.500h12M0 6h12M0 10.500h12M8 0v3M3.500 4.500v3M8 9v3" /></svg></button>
        </div>
      </div>

      <nav class="bookmarks">
        <a v-for="mark in bookmarks" :key="mark.title" href="#">
          <svg width="16" height="16"><use :href="'#i-' + mark.icon" /></svg><span>{{ mark.title }}</span>
        </a>
        <button class="more-marks" type="button" aria-label="More bookmarks">»</button>
      </nav>
    </header>

    <div class="viewport">
      <main class="page">
        <form class="search" @submit.prevent>
          <a class="logo" href="#">Google</a>
          <div class="field">
            <input ref="box" v-model="query" type="text" aria-label="Search" spellcheck="false" />
            <button type="button" aria-label="Clear"><svg width="14" height="14" viewBox="0 0 14 14"><path d="M.7.7l12.600 12.600M13.300.7.7 13.300" fill="none" stroke="#858a8f" stroke-width="1.800" /></svg></button>
            <span class="split"></span>
            <button type="submit" aria-label="Search Google"><svg width="18" height="18" viewBox="0 0 18 18"><circle cx="6.800" cy="6.800" r="5.500" fill="none" stroke="#8ab4f8" stroke-width="2" /><path d="M11 11l6 6" stroke="#8ab4f8" stroke-width="2.400" /></svg></button>
          </div>
        </form>

        <nav class="modes">
          <div class="modes-inner">
            <a v-for="(mode, i) in modes" :key="mode.label" href="#" :class="{ current: i === 0 }">
              <svg width="15" height="16"><use :href="'#i-' + mode.icon" /></svg><span>{{ mode.label }}</span>
            </a>
            <button type="button"><svg width="4" height="12" viewBox="0 0 4 12"><circle cx="2" cy="1.500" r="1.400" /><circle cx="2" cy="6" r="1.400" /><circle cx="2" cy="10.500" r="1.400" /></svg>More</button>
            <button class="tools" type="button">Tools</button>
          </div>
        </nav>

        <div class="results">
          <p class="stats">About 1,010,000,000 results (0.86 seconds)</p>
          <p class="showing">Showing results for <a href="#">asia <b><i>countries</i></b> map</a></p>
          <p class="instead">Search instead for <a href="#">asia countris map</a></p>

          <div class="heading">
            <svg width="20" height="20"><use href="#i-images" /></svg>
            <h2>Images for asia countries map</h2>
            <button type="button" aria-label="About this result"><svg width="4" height="14" viewBox="0 0 4 14"><circle cx="2" cy="2" r="1.700" /><circle cx="2" cy="7" r="1.700" /><circle cx="2" cy="12" r="1.700" /></svg></button>
          </div>

          <div class="chips">
            <a v-for="chip in chips" :key="chip.label" class="chip" href="#">
              <svg width="32" height="32" viewBox="40 -10 348 368" preserveAspectRatio="xMidYMid slice" aria-hidden="true">
                <rect x="-100" y="-20" width="700" height="400" :fill="chip.sea" />
                <g filter="url(#coast)" :stroke="chip.outline" stroke-width="3"><polygon v-for="(area, n) in chip.areas" :key="n" :fill="area[0]" :points="area[1]" /></g>
              </svg>
              <span>{{ chip.label }}</span>
            </a>
            <button class="expand" type="button" aria-label="More filters"><svg width="12" height="8" viewBox="0 0 12 8"><path d="M1 1l5 5 5-5" /></svg></button>
          </div>

          <div class="gallery">
            <div v-for="row in rows" :key="row.size" class="strip" :class="row.size">
              <a v-for="tile in row.tiles" :key="tile.name" href="#" :aria-label="tile.name" :style="{ flexGrow: tile.w }">
                <svg :viewBox="`0 0 ${tile.w} ${tile.h}`" preserveAspectRatio="xMinYMin slice">
                  <rect width="520" height="400" :fill="tile.sea" />
                  <g filter="url(#coast)" :stroke="tile.outline" stroke-width="2">
                    <polygon v-for="(area, n) in tile.areas" :key="n" :fill="area[0]" :points="area[1]" />
                  </g>
                  <g stroke="#263238" stroke-width="2.500" stroke-dasharray="4 1.500" opacity=".55">
                    <line v-for="(note, n) in tile.notes" :key="n" :x1="note[0]" :y1="note[1]" :x2="note[0] + note[2]" :y2="note[1]" />
                  </g>
                  <text v-for="label in tile.labels" :key="label[0]" :class="{ strong: label[3] > 16, slanted: label[0] === 'Asia' }" :x="label[1]" :y="label[2]" :font-size="label[3]" :fill="label[4] || '#1e2420'">{{ label[0] }}</text>
                </svg>
              </a>
            </div>
          </div>
        </div>
      </main>
      <div class="scrollbar" aria-hidden="true">
        <svg width="15" height="16" viewBox="0 0 15 16"><path d="M4 10l3.500-3.500L11 10" fill="none" stroke="#a0a0a0" stroke-width="2" /></svg>
        <div class="rail"><div class="thumb"></div></div>
        <svg width="15" height="16" viewBox="0 0 15 16"><path d="M4 6l3.500 3.500L11 6" fill="none" stroke="#505050" stroke-width="2" /></svg>
      </div>
    </div>

    <footer class="taskbar">
      <div class="apps">
        <button v-for="app in apps" :key="app" type="button" :class="{ running: app === 'opera' }" :aria-label="app">
          <svg width="18" height="18" viewBox="0 0 18 18">
            <path v-if="app === 'start'" d="M1 3.500 8 2.500v6H1zM9 2.300 17 1v7.500H9zM1 9.500h7v6l-7-1zM9 9.500h8V17l-8-1.300z" fill="#fff" />
            <g v-else-if="app === 'search'" fill="none" stroke="#fff" stroke-width="1.400"><circle cx="10" cy="6.500" r="5" /><path d="M6.500 10 .5 17" /></g>
            <g v-else-if="app === 'word'"><path d="M9 2h8v14H9z" fill="#fff" /><path d="M10 5h6M10 8h6M10 11h6M10 14h6" stroke="#2b579a" /><path d="M1 3 11 1v16L1 15z" fill="#2457a8" /><path d="m2.500 6 1.500 6 2-6 2 6L9.500 6" fill="none" stroke="#fff" stroke-width="1.200" /></g>
            <g v-else-if="app === 'folder'"><path d="M1 2h6l1 2h9v12H1z" fill="#f5bd3b" /><path d="M1 6h16v10H1z" fill="#ffdf79" /><path d="M4 16v-6h10v6h-3v-3H7v3z" fill="#2f9be0" /></g>
            <g v-else-if="app === 'store'"><path d="M6 4V1h6v3" fill="none" stroke="#21a6e8" stroke-width="1.500" /><path d="M2 4h14v12q0 1-1 1H3q-1 0-1-1z" fill="#f4f4f4" /><path d="M5 7h3.500v3.500H5z" fill="#f25022" /><path d="M9.500 7H13v3.500H9.500z" fill="#7fba00" /><path d="M5 11.500h3.500V15H5z" fill="#00a4ef" /><path d="M9.500 11.500H13V15H9.500z" fill="#ffb900" /></g>
            <path v-else-if="app === 'vs'" d="M2 5.500 13 15.500V2.500L2 12.500zM13 1.500l4 2v11l-4 2" fill="none" stroke="#b179d3" stroke-width="2" />
            <g v-else-if="app === 'rar'"><path d="M1 1h16v5H1z" fill="#b23ba0" /><path d="M1 6h16v6H1z" fill="#2e6ed1" /><path d="M1 12h16v5H1z" fill="#3fa346" /><path d="M1 4h16M1 10h16M1 15h16" stroke="#e8b33a" /><path d="M6.500 1h5v16h-5z" fill="#c5283b" /><path d="M7.500 7h3v4h-3z" fill="#f8dc87" /></g>
            <g v-else-if="app === 'chrome'"><circle cx="9" cy="9" r="8" fill="#fbc116" /><path d="M9 9 2 5a8 8 0 0 1 14 0z" fill="#e33b2e" /><path d="M9 9 8 17A8 8 0 0 1 2 5z" fill="#2da94f" /><circle cx="9" cy="9" r="4" fill="#fff" /><circle cx="9" cy="9" r="3" fill="#2f7de9" /></g>
            <g v-else-if="app === 'sublime'"><rect x="1" y="1" width="16" height="16" rx="2" fill="#4b4b4b" /><path d="M13 3 5 6v3.500L13 7zM5 8.500 13 11v3.500L5 12z" fill="#ff9d1e" /><path d="M5 6.500 13 9v5.500L5 12.500l8-2.500" fill="#ff9d1e" /></g>
            <ellipse v-else cx="9" cy="9" rx="6.300" ry="7.200" fill="none" stroke="#ff1b2d" stroke-width="3.500" />
          </svg>
        </button>
      </div>
      <div class="tray">
        <svg width="14" height="14" viewBox="0 0 14 14"><path d="M5 1v5M9 8v5M1 9h5M8 5h5M9 1v2M5 11v2M1 5h4M9 9h4" fill="none" stroke="#fff" stroke-width="2" stroke-linecap="round" /></svg>
        <svg width="16" height="16" viewBox="0 0 16 16"><path d="M7 0l6 2v6q-1 5-6 7Q1 12 1 8V2z" fill="#fff" /><path d="M7 1v13M1 7h12" stroke="#222" /><circle cx="11" cy="11" r="5" fill="#16a062" /><path d="m8.500 11 2 2 3-4" fill="none" stroke="#fff" stroke-width="1.300" /></svg>
        <svg width="16" height="16" viewBox="0 0 16 16"><path d="M1 2h8M5 2v11M5 13H3M8 5v9h3.500c3.500 0 3.500-4.500 0-4.500 3-.4 2.500-4.500-.5-4.500zM8 9.500h3.500" fill="none" stroke="#fff" stroke-width="1.800" /></svg>
        <svg width="16" height="14" viewBox="0 0 16 14"><path d="M1 5h2l4-4v12L3 9H1zM10 5l4 4M14 5l-4 4" fill="none" stroke="#fff" /></svg>
        <svg width="14" height="14" viewBox="0 0 14 14"><path d="M2 12A10 10 0 0 1 13 2M5 13A8 8 0 0 1 13 5M8 13a5 5 0 0 1 5-5" fill="none" stroke="#d7d7d7" stroke-width="1.300" /><circle cx="12" cy="12" r="1.500" fill="#fff" /></svg>
        <svg width="16" height="10" viewBox="0 0 16 10"><path d="M.6.6h13v8.800H.6zM14 3h1.500v4H14" fill="none" stroke="#fff" stroke-width="1.200" /><path d="M3 3h4v4H3z" fill="#fff" /></svg>
        <svg width="16" height="14" viewBox="0 0 18 14"><path d="M2 2q8-4 14 1 3 5-2 9-8 3-12-2-3-5 0-8z" fill="#bb5211" /><path d="M3 2q7-4 13 1 2 3 1 5Q8 9 3 2z" fill="#e69a22" /></svg>
        <time>2:11 PM</time>
        <button class="plain" type="button" aria-label="Notifications"><svg width="17" height="17" viewBox="0 0 17 17"><path d="M1 1h15v11.500h-5l-2.500 3v-3H1z" /></svg></button>
      </div>
    </footer>
  </div>
</template>

<style>
html,
body {
  height: 100%;
  background: #202124;
}
</style>

<style scoped>
* {
  box-sizing: border-box;
}
.screen {
  height: 100vh;
  display: flex;
  flex-direction: column;
  overflow: hidden;
  font-family: 'Open Sans', 'Noto Sans', sans-serif;
  font-size: 12px;
  color: #e4e8ec;
}
.defs {
  position: absolute;
}
svg {
  display: block;
  flex: none;
}
button {
  border: 0;
  padding: 0;
  background: none;
  color: inherit;
  font: inherit;
}
a {
  color: inherit;
  text-decoration: none;
}
.plain {
  display: flex;
  align-items: center;
  justify-content: center;
}
.plain svg {
  fill: none;
  stroke: #d3d9de;
  stroke-width: 1.2;
}
.browser {
  background: #374553;
  border-bottom: 1px solid #17191c;
}
.tabstrip {
  display: flex;
  height: 31px;
  background: linear-gradient(#181b1e, #1a1f23);
}
.menu {
  width: 74px;
  padding-left: 10px;
  display: flex;
  align-items: center;
  gap: 6px;
  color: #fff;
}
.tab {
  position: relative;
  width: 119px;
  display: flex;
  align-items: center;
  gap: 3px;
  padding-left: 7px;
}
.tab.apart::after {
  content: '';
  position: absolute;
  right: 0;
  top: 7px;
  height: 17px;
  width: 1px;
  background: #93a2ae;
}
.tab.active {
  width: 116px;
  margin-left: 3px;
  padding-left: 5px;
  background: #374553;
  color: #fff;
}
.title {
  width: 68px;
  overflow: hidden;
  white-space: nowrap;
  mask-image: linear-gradient(90deg, #000 75%, transparent);
}
.close {
  width: 12px;
  display: flex;
  justify-content: center;
}
.close svg {
  fill: none;
  stroke: #c8cdd1;
  stroke-width: 1.2;
}
.active .close svg {
  stroke: #fff;
}
.add {
  width: 31px;
}
.window-controls {
  margin-left: auto;
  display: flex;
}
.window-controls button {
  width: 40px;
}
.window-controls svg,
.add svg {
  stroke: #eef0f2;
}
.toolbar {
  height: 38px;
  padding-right: 4px;
  display: flex;
  align-items: center;
}
.nav {
  display: flex;
  padding-left: 4px;
}
.nav button {
  width: 33px;
  height: 28px;
}
.nav .dim {
  opacity: 0.4;
}
.bar {
  width: 1px;
  height: 29px;
  margin: 0 5px;
  background: #6a7783;
}
.vpn {
  margin-left: 13px;
  width: 24px;
  height: 14px;
  border: 1px solid #c3c9ce;
  border-radius: 2px;
  font-size: 9px;
  line-height: 12px;
}
.lock {
  margin: 0 20px 0 10px;
}
.address {
  flex: 1;
  font-size: 13px;
  color: #b1bac3;
}
.address b {
  font-weight: 400;
  color: #fff;
}
.page-tools {
  display: flex;
}
.page-tools button {
  width: 26px;
}
.bar + .extensions {
  display: flex;
}
.extensions button {
  width: 33px;
  height: 28px;
}
.page-tools + .bar {
  margin: 0 3px;
}
.bookmarks {
  height: 31px;
  padding: 0 20px 3px 14px;
  display: grid;
  grid-template-columns: 67px 75px 113px 150px 148px 150px 115px 150px 143px 1fr 20px;
  align-items: center;
}
.bookmarks a {
  display: flex;
  align-items: center;
  gap: 8px;
  white-space: nowrap;
}
.more-marks {
  font-size: 16px;
  line-height: 18px;
}
.viewport {
  flex: 1;
  min-height: 0;
  display: flex;
  background: #202124;
}
.page {
  flex: 1;
  min-width: 0;
  overflow: hidden;
  font-family: 'Liberation Sans', Arial, sans-serif;
  color: #bdc1c6;
}
.search {
  display: flex;
  align-items: center;
  padding-top: 26px;
}
.logo {
  width: 160px;
  padding-left: 23px;
  font: 500 30px/46px Lato, sans-serif;
  color: #fff;
}
.field {
  width: 692px;
  height: 46px;
  display: flex;
  align-items: center;
  padding: 0 20px 0 21px;
  border-radius: 23px;
  background: #303134;
  box-shadow: 0 2px 8px #17181a;
}
.field input {
  flex: 1;
  min-width: 0;
  height: 39px;
  padding: 0;
  border: 0;
  outline: 0;
  background: none;
  color: #fff;
  font: 16px/39px 'Liberation Sans', Arial, sans-serif;
}
.field input::selection {
  background: #0068e8;
  color: #fff;
}
.split {
  width: 1px;
  height: 28px;
  margin: 0 15px 0 17px;
  background: #5f6368;
}
.modes {
  margin-top: 21px;
  border-bottom: 1px solid #3c4043;
}
.modes-inner {
  width: 652px;
  height: 39px;
  margin-left: 180px;
  display: flex;
  gap: 25px;
  font: 14px/33px Lato, sans-serif;
  color: #9aa0a6;
}
.modes a,
.modes button {
  display: flex;
  align-items: center;
  gap: 6px;
  height: 39px;
  padding-bottom: 7px;
}
.modes button svg,
.heading button svg {
  fill: #bdc1c6;
}
.modes .current {
  padding-bottom: 4px;
  border-bottom: 3px solid #8ab4f8;
  color: #8ab4f8;
}
.modes .tools {
  margin-left: auto;
}
.results {
  width: 652px;
  margin-left: 180px;
}
p {
  margin: 0;
}
.stats {
  padding-top: 11px;
  font: 14px/20px Lato, sans-serif;
  color: #9aa0a6;
}
.showing {
  padding-top: 22px;
  font-size: 18px;
  line-height: 22px;
}
.instead {
  font-size: 15px;
  line-height: 18px;
}
p a {
  color: #8ab4f8;
}
.heading {
  display: flex;
  align-items: center;
  gap: 12px;
  padding-top: 26px;
  color: #9aa0a6;
}
h2 {
  margin: 0 20px 0 0;
  font: 400 23px/30px Lato, sans-serif;
  color: #e8eaed;
}
.chips {
  display: flex;
  align-items: center;
  gap: 6px;
  padding-top: 15px;
}
.chip {
  height: 36px;
  display: flex;
  align-items: center;
  gap: 8px;
  padding: 0 11px 0 1px;
  border: 1px solid #3c4043;
  border-radius: 18px;
  font-size: 14px;
}
.chip svg {
  border-radius: 50%;
}
.expand {
  width: 34px;
  height: 34px;
  margin-left: auto;
  display: flex;
  align-items: center;
  justify-content: center;
  border: 1px solid #3c4043;
  border-radius: 50%;
}
.expand svg {
  fill: none;
  stroke: #e8eaed;
  stroke-width: 2;
}
.gallery {
  margin-top: 10px;
  border-radius: 16px 16px 0 0;
  overflow: hidden;
}
.strip {
  display: flex;
  gap: 2px;
  margin-bottom: 2px;
}
.strip a {
  flex-basis: 0;
  overflow: hidden;
}
.strip svg {
  width: 100%;
  height: 100%;
}
.first {
  height: 116px;
}
.second {
  height: 126px;
}
.third {
  width: 132px;
  height: 126px;
}
.strip text {
  font-family: 'Liberation Sans', Arial, sans-serif;
}
.strip .strong {
  font-family: 'DejaVu Sans', sans-serif;
  font-weight: 700;
}
.strip .slanted {
  font-style: italic;
}
.scrollbar {
  width: 15px;
  display: flex;
  flex-direction: column;
  background: #f1f1f1;
}
.rail {
  flex: 1;
}
.thumb {
  height: 78%;
  background: #c1c1c1;
}
.taskbar {
  height: 30px;
  display: flex;
  justify-content: space-between;
  background: linear-gradient(90deg, #080405 0, #170b09 12%, #1c0d08 24%, #3f2415 28%, #392b26 34%, #3b4144 42%, #434a4d 55%, #343a3e 64%, #120908 69%, #3a2a25 73%, #2d1c19 78%, #0d0607 86%, #080505);
}
.apps {
  display: flex;
}
.apps button {
  width: 37px;
  display: flex;
  align-items: center;
  justify-content: center;
}
.apps .running {
  background: #006e66;
  border-bottom: 2px solid #71dbd5;
}
.tray {
  display: flex;
  align-items: center;
  gap: 9px;
  color: #fff;
}
.tray time {
  margin-left: 3px;
}
.tray button {
  width: 38px;
  margin-right: 14px;
}
.tray button svg {
  stroke: #fff;
}
</style>
